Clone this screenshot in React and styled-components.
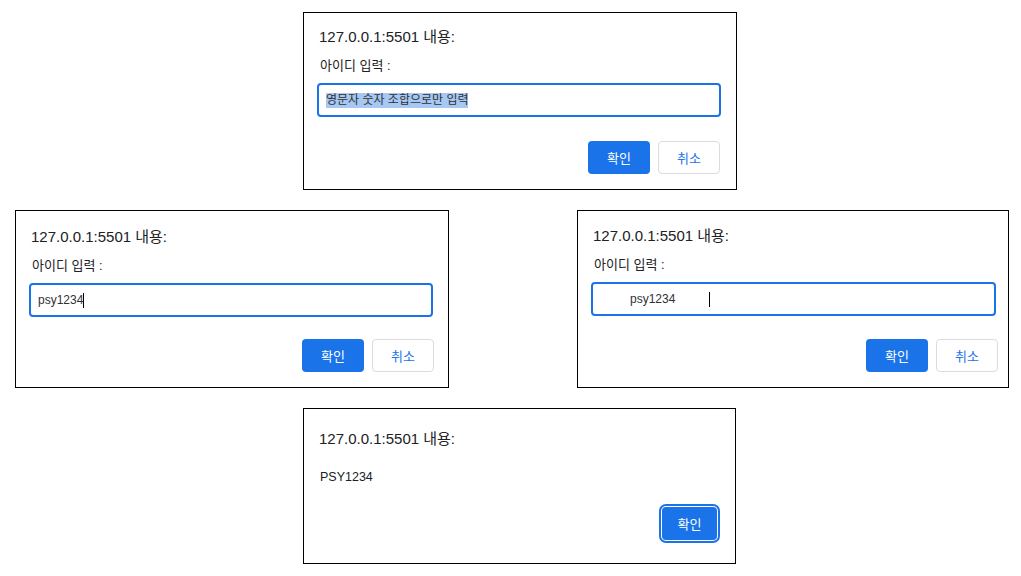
import React from "react";
import styled, { createGlobalStyle, css } from "styled-components";

const ORIGIN = "127.0.0.1:5501 내용:";

function PromptDialog({ width, top, right, fieldRight, children }) {
    return (
        <Dialog $width={width} $height={178} $top={top} $right={fieldRight}>
            <Title>{ORIGIN}</Title>
            <Label>아이디 입력 :</Label>
            <Field>{children}</Field>
            <ButtonRow $right={right}>
                <Button $primary>확인</Button>
                <Button>취소</Button>
            </ButtonRow>
        </Dialog>
    )
}

function AlertDialog({ message }) {
    return (
        <Dialog $width={433} $height={156} $top={21}>
            <Title>{ORIGIN}</Title>
            <Message>{message}</Message>
            <ButtonRow $right={3} $bottom={8}>
                <Button $primary $focused $w={55}>확인</Button>
            </ButtonRow>
        </Dialog>
    )
}

export default function App() {
    return (
        <>
            <GlobalStyle />
            <Page>
                <Row $left={303}>
                    <PromptDialog width={434} top={15} right={1}>
                        <Selected>영문자 숫자 조합으로만 입력</Selected>
                    </PromptDialog>
                </Row>
                <Row $left={15} $gap={128}>
                    <PromptDialog width={434} top={17} right={-1}>
                        psy1234<Caret />
                    </PromptDialog>
                    <PromptDialog width={432} top={16} right={-2} fieldRight={12}>
                        {"         psy1234          "}<Caret />
                    </PromptDialog>
                </Row>
                <Row $left={303}>
                    <AlertDialog message="PSY1234" />
                </Row>
            </Page>
        </>
    )
}

const GlobalStyle = createGlobalStyle`
html, body {
margin: 0;
background: #fff;}
body {
font-family: "Liberation Sans", "Noto Sans CJK KR", sans-serif;
color: #202124;}`

const Page = styled.div`
display: flex;
flex-direction: column;
gap: 20px;
padding-top: 12px;`

const Row = styled.div`
display: flex;
gap: ${p => p.$gap || 0}px;
padding-left: ${p => p.$left}px;`

const Dialog = styled.div`
box-sizing: border-box;
width: ${p => p.$width}px;
height: ${p => p.$height}px;
border: 1px solid #000;
background: #fff;
padding: ${p => p.$top}px ${p => p.$right || 15}px 15px 13px;
display: flex;
flex-direction: column;`

const Title = styled.div`
font-size: 15px;
line-height: 18px;
padding-left: 2px;`

const Label = styled.div`
font-size: 13px;
line-height: 16px;
margin-top: 12px;
padding-left: 3px;`

const Message = styled.div`
font-size: 12.5px;
line-height: 16px;
margin-top: 21px;
padding-left: 3px;`

const Field = styled.div`
box-sizing: border-box;
margin-top: 9px;
height: 34px;
border: 2px solid #1a73e8;
border-radius: 4px;
padding: 0 7px;
display: flex;
align-items: center;
font-size: 12px;
color: #303134;
white-space: pre;`

const Selected = styled.span`
background: #a6c8f2;
line-height: 15px;`

const Caret = styled.span`
display: inline-block;
width: 1px;
height: 15px;
background: #000;`

const ButtonRow = styled.div`
display: flex;
justify-content: flex-end;
gap: 8px;
margin-top: auto;
margin-right: ${p => p.$right || 0}px;
margin-bottom: ${p => p.$bottom || 0}px;`

const Button = styled.button`
box-sizing: border-box;
width: ${p => p.$w || 62}px;
height: 33px;
padding: 0;
border-radius: 4px;
font-family: inherit;
font-size: 13px;
background: #fff;
color: #1a73e8;
border: 1px solid #dadce0;
${p => p.$primary && css`
background: #1a73e8;
color: #fff;
border: none;`}
${p => p.$focused && css`
box-shadow: 0 0 0 1px #fff, 0 0 0 3px #1a73e8;`}`
